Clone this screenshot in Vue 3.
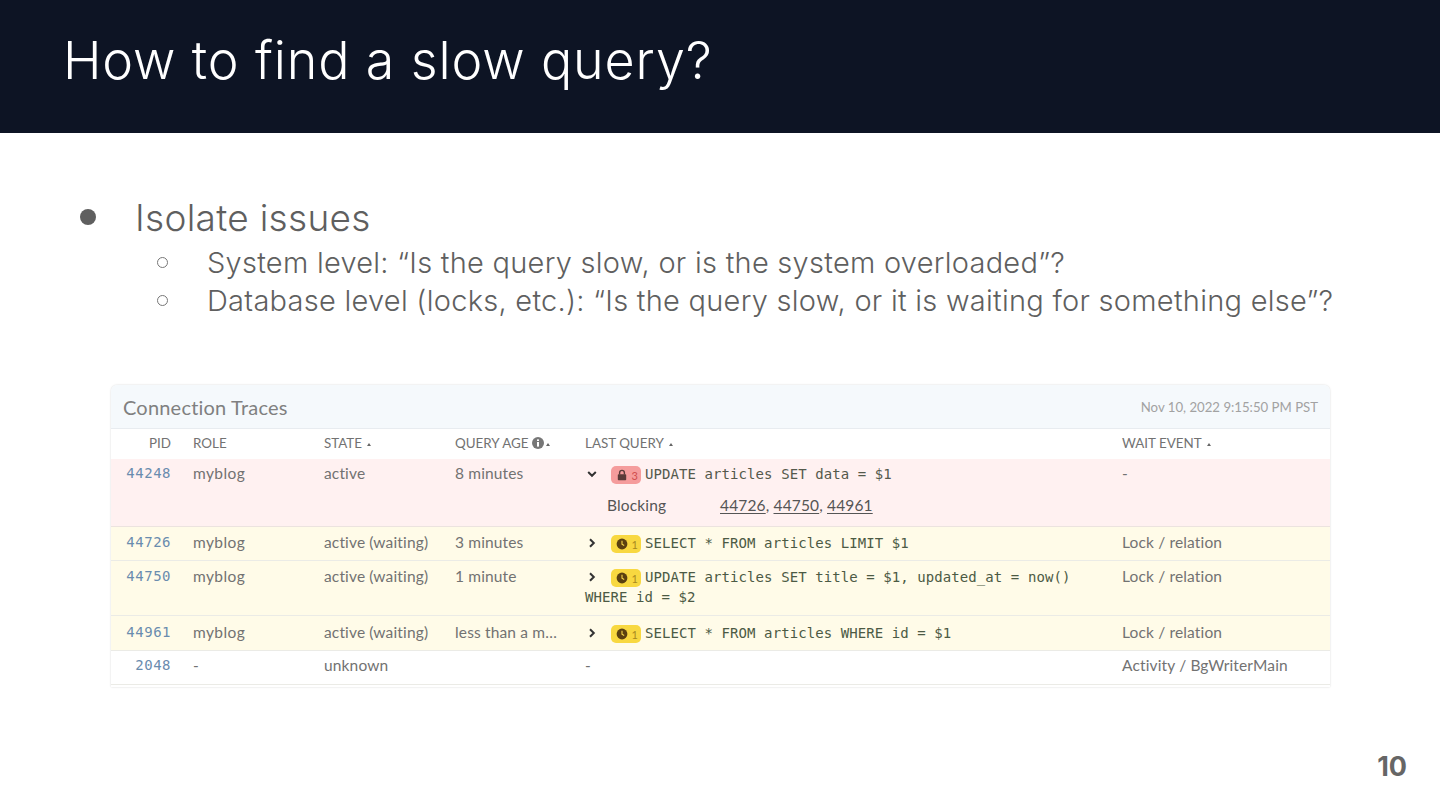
<script setup>
const subItems = [
  'System level: “Is the query slow, or is the system overloaded”?',
  'Database level (locks, etc.): “Is the query slow, or it is waiting for something else”?'
]

const columns = [
  { label: 'PID', cls: 'col-pid' },
  { label: 'ROLE' },
  { label: 'STATE', sort: true },
  { label: 'QUERY AGE', info: true, sort: true },
  { label: 'LAST QUERY', sort: true },
  { label: 'WAIT EVENT', sort: true }
]

const rows = [
  { pid: '44248', role: 'myblog', state: 'active', age: '8 minutes', tone: 'red', open: true, count: 3, query: 'UPDATE articles SET data = $1', wait: '-', blocking: ['44726', '44750', '44961'] },
  { pid: '44726', role: 'myblog', state: 'active (waiting)', age: '3 minutes', tone: 'yellow', count: 1, query: 'SELECT * FROM articles LIMIT $1', wait: 'Lock / relation' },
  { pid: '44750', role: 'myblog', state: 'active (waiting)', age: '1 minute', tone: 'yellow', tall: true, count: 1, query: 'UPDATE articles SET title = $1, updated_at = now() WHERE id = $2', wait: 'Lock / relation' },
  { pid: '44961', role: 'myblog', state: 'active (waiting)', age: 'less than a m…', tone: 'yellow', low: true, count: 1, query: 'SELECT * FROM articles WHERE id = $1', wait: 'Lock / relation' },
  { pid: '2048', role: '-', state: 'unknown', age: '', tone: 'plain', wait: 'Activity / BgWriterMain' }
]
</script>

<template>
  <div class="slide">
    <header class="slide-head">
      <h1>How to find a slow query?</h1>
    </header>

    <section class="points">
      <div class="point">
        <span class="dot"></span>
        <span>Isolate issues</span>
      </div>
      <div v-for="item in subItems" :key="item" class="sub-point">
        <span class="ring"></span>
        <span>{{ item }}</span>
      </div>
    </section>

    <section class="traces">
      <div class="traces-title">
        <span class="name">Connection Traces</span>
        <span class="stamp">Nov 10, 2022 9:15:50 PM PST</span>
      </div>

      <div class="row head">
        <div v-for="col in columns" :key="col.label" :class="col.cls">
          {{ col.label }}
          <svg v-if="col.info" class="info" viewBox="0 0 12 12">
            <circle cx="6" cy="6" r="6" fill="#777" />
            <rect x="5" y="2.4" width="2" height="1.6" fill="#fff" />
            <rect x="5" y="5" width="2" height="4.6" fill="#fff" />
          </svg>
          <span v-if="col.sort" class="sort"></span>
        </div>
      </div>

      <div v-for="row in rows" :key="row.pid" class="row" :class="[row.tone, { tall: row.tall, low: row.low }]">
        <div class="col-pid mono pid">{{ row.pid }}</div>
        <div class="role">{{ row.role }}</div>
        <div>{{ row.state }}</div>
        <div>{{ row.age }}</div>
        <div class="query">
          <template v-if="row.query">
            <svg class="chevron" viewBox="0 0 10 10">
              <path v-if="row.open" d="M1.2 3 L5 6.8 L8.8 3" />
              <path v-else d="M3 1.2 L6.8 5 L3 8.8" />
            </svg>
            <span class="badge">
              <svg v-if="row.tone === 'red'" class="badge-icon" viewBox="0 0 12 12">
                <path d="M3.6 5.4 V3.8 a2.4 2.4 0 0 1 4.8 0 V5.4" fill="none" stroke="#5b3a38" stroke-width="1.4" />
                <rect x="1.8" y="5.2" width="8.4" height="6" rx="0.8" fill="#5b3a38" />
              </svg>
              <svg v-else class="badge-icon" viewBox="0 0 12 12">
                <circle cx="6" cy="6" r="5.4" fill="#5a4010" />
                <path d="M6 2.8 V6.2 L8.2 7.4" fill="none" stroke="#f8d84a" stroke-width="1.1" />
              </svg>
              <span class="badge-count">{{ row.count }}</span>
            </span>
            <span class="mono sql">{{ row.query }}</span>
          </template>
          <template v-else>-</template>
          <div v-if="row.blocking" class="blocking">
            <span class="blocking-label">Blocking</span>
            <span>
              <template v-for="(pid, i) in row.blocking" :key="pid">
                <u>{{ pid }}</u><template v-if="i < row.blocking.length - 1">, </template>
              </template>
            </span>
          </div>
        </div>
        <div>{{ row.wait }}</div>
      </div>
    </section>

    <footer class="page-no">10</footer>
  </div>
</template>

<style>
body {
  margin: 0;
  background: #fff;
}
</style>

<style scoped>
.slide {
  width: 1440px;
  height: 810px;
  overflow: hidden;
  display: flex;
  flex-direction: column;
  background: #fff;
  font-family: Inter, "Open Sans", sans-serif;
}

.slide-head {
  height: 133px;
  flex-shrink: 0;
  background: #0d1424;
  padding-left: 63px;
  display: flex;
  align-items: center;
  box-sizing: border-box;
  padding-bottom: 13px;
}

.slide-head h1 {
  margin: 0;
  font-size: 52px;
  font-weight: 300;
  letter-spacing: 0.86px;
  color: #fff;
}

.points {
  margin-top: 62px;
  color: #5f5f5f;
  font-weight: 300;
}

.point {
  display: flex;
  align-items: center;
  height: 44px;
  margin-bottom: 4px;
  padding-left: 80px;
  font-size: 37px;
  letter-spacing: 0.3px;
}

.dot {
  width: 16px;
  height: 16px;
  border-radius: 50%;
  background: #5f5f5f;
  margin-right: 39px;
}

.sub-point {
  display: flex;
  align-items: center;
  height: 38px;
  padding-left: 157px;
  font-size: 29px;
  letter-spacing: 0.26px;
}

.ring {
  width: 11px;
  height: 11px;
  border: 1px solid #777;
  border-radius: 50%;
  box-sizing: border-box;
  margin-right: 39px;
}

.traces {
  margin: 66px 0 0 111px;
  width: 1219px;
  height: 302px;
  overflow: hidden;
  flex-shrink: 0;
  border-radius: 6px 6px 0 0;
  box-shadow: 0 0 2px rgba(0, 0, 0, 0.18);
  font-family: Lato, "Open Sans", sans-serif;
  font-size: 15.5px;
  letter-spacing: 0.15px;
  color: #727272;
}

.traces-title {
  height: 43px;
  background: #f5f9fc;
  border-bottom: 1px solid #e8ecf0;
  display: flex;
  align-items: center;
  justify-content: space-between;
  padding: 0 12px;
}

.name {
  font-size: 20px;
  letter-spacing: 0.2px;
  color: #808080;
}

.stamp {
  font-size: 13.2px;
  letter-spacing: 0;
  color: #a2a2a2;
}

.row {
  display: grid;
  grid-template-columns: 60px 153px 131px 130px 537px 1fr;
  padding-top: 6px;
  line-height: 19px;
  border-bottom: 1px solid #ebebe6;
  box-sizing: border-box;
  height: 34px;
}

.row > .col-pid {
  text-align: right;
}

.row > :nth-child(2) {
  padding-left: 22px;
}

.role {
  letter-spacing: 0.4px;
}

.head {
  height: 30px;
  padding-top: 4px;
  font-size: 13.4px;
  letter-spacing: 0;
  line-height: 20px;
  background: #fff;
  border-bottom: 0;
}

.info {
  width: 12px;
  height: 12px;
  vertical-align: -1px;
}

.sort {
  display: inline-block;
  width: 0;
  height: 0;
  margin-left: 2px;
  vertical-align: 2px;
  border-left: 2.5px solid transparent;
  border-right: 2.5px solid transparent;
  border-bottom: 3px solid #666;
}

.red {
  background: #fff1f1;
  height: 68px;
  padding-top: 5px;
  border-color: #ece3df;
}

.yellow {
  background: #fffbe8;
}

.tall {
  height: 55px;
}

.low {
  height: 35px;
  padding-top: 7px;
}

.plain {
  background: #fff;
  padding-top: 5px;
}

.mono {
  font-family: "DejaVu Sans Mono", "Liberation Mono", monospace;
  font-size: 14px;
}

.pid {
  color: #6a8cae;
  letter-spacing: 0.5px;
}

.query {
  padding-right: 30px;
}

.chevron {
  width: 10px;
  height: 10px;
  margin: 0 14px 0 2px;
  fill: none;
  stroke: #333;
  stroke-width: 2;
}

.badge {
  display: inline-flex;
  align-items: center;
  justify-content: space-between;
  box-sizing: border-box;
  width: 30px;
  height: 18px;
  padding: 0 3px 0 5px;
  margin-right: 4px;
  border-radius: 5px;
  background: #f8d840;
  vertical-align: middle;
}

.badge-icon {
  width: 12px;
  height: 12px;
}

.badge-count {
  font-size: 11px;
  line-height: 1;
  color: #a88a20;
}

.red .badge {
  background: #f59c9c;
}

.red .badge-count {
  color: #d04d4d;
}

.sql {
  color: #4c5a44;
  letter-spacing: 0.08px;
}

.red .sql {
  color: #55594c;
}

.blocking {
  display: grid;
  grid-template-columns: 113px 1fr;
  margin: 12px 0 0 22px;
  color: #555;
}

.blocking u {
  text-underline-offset: 2px;
}

.page-no {
  margin-top: auto;
  padding: 0 33px 27px 0;
  text-align: right;
  font-size: 27px;
  font-weight: 700;
  color: #666;
}
</style>
